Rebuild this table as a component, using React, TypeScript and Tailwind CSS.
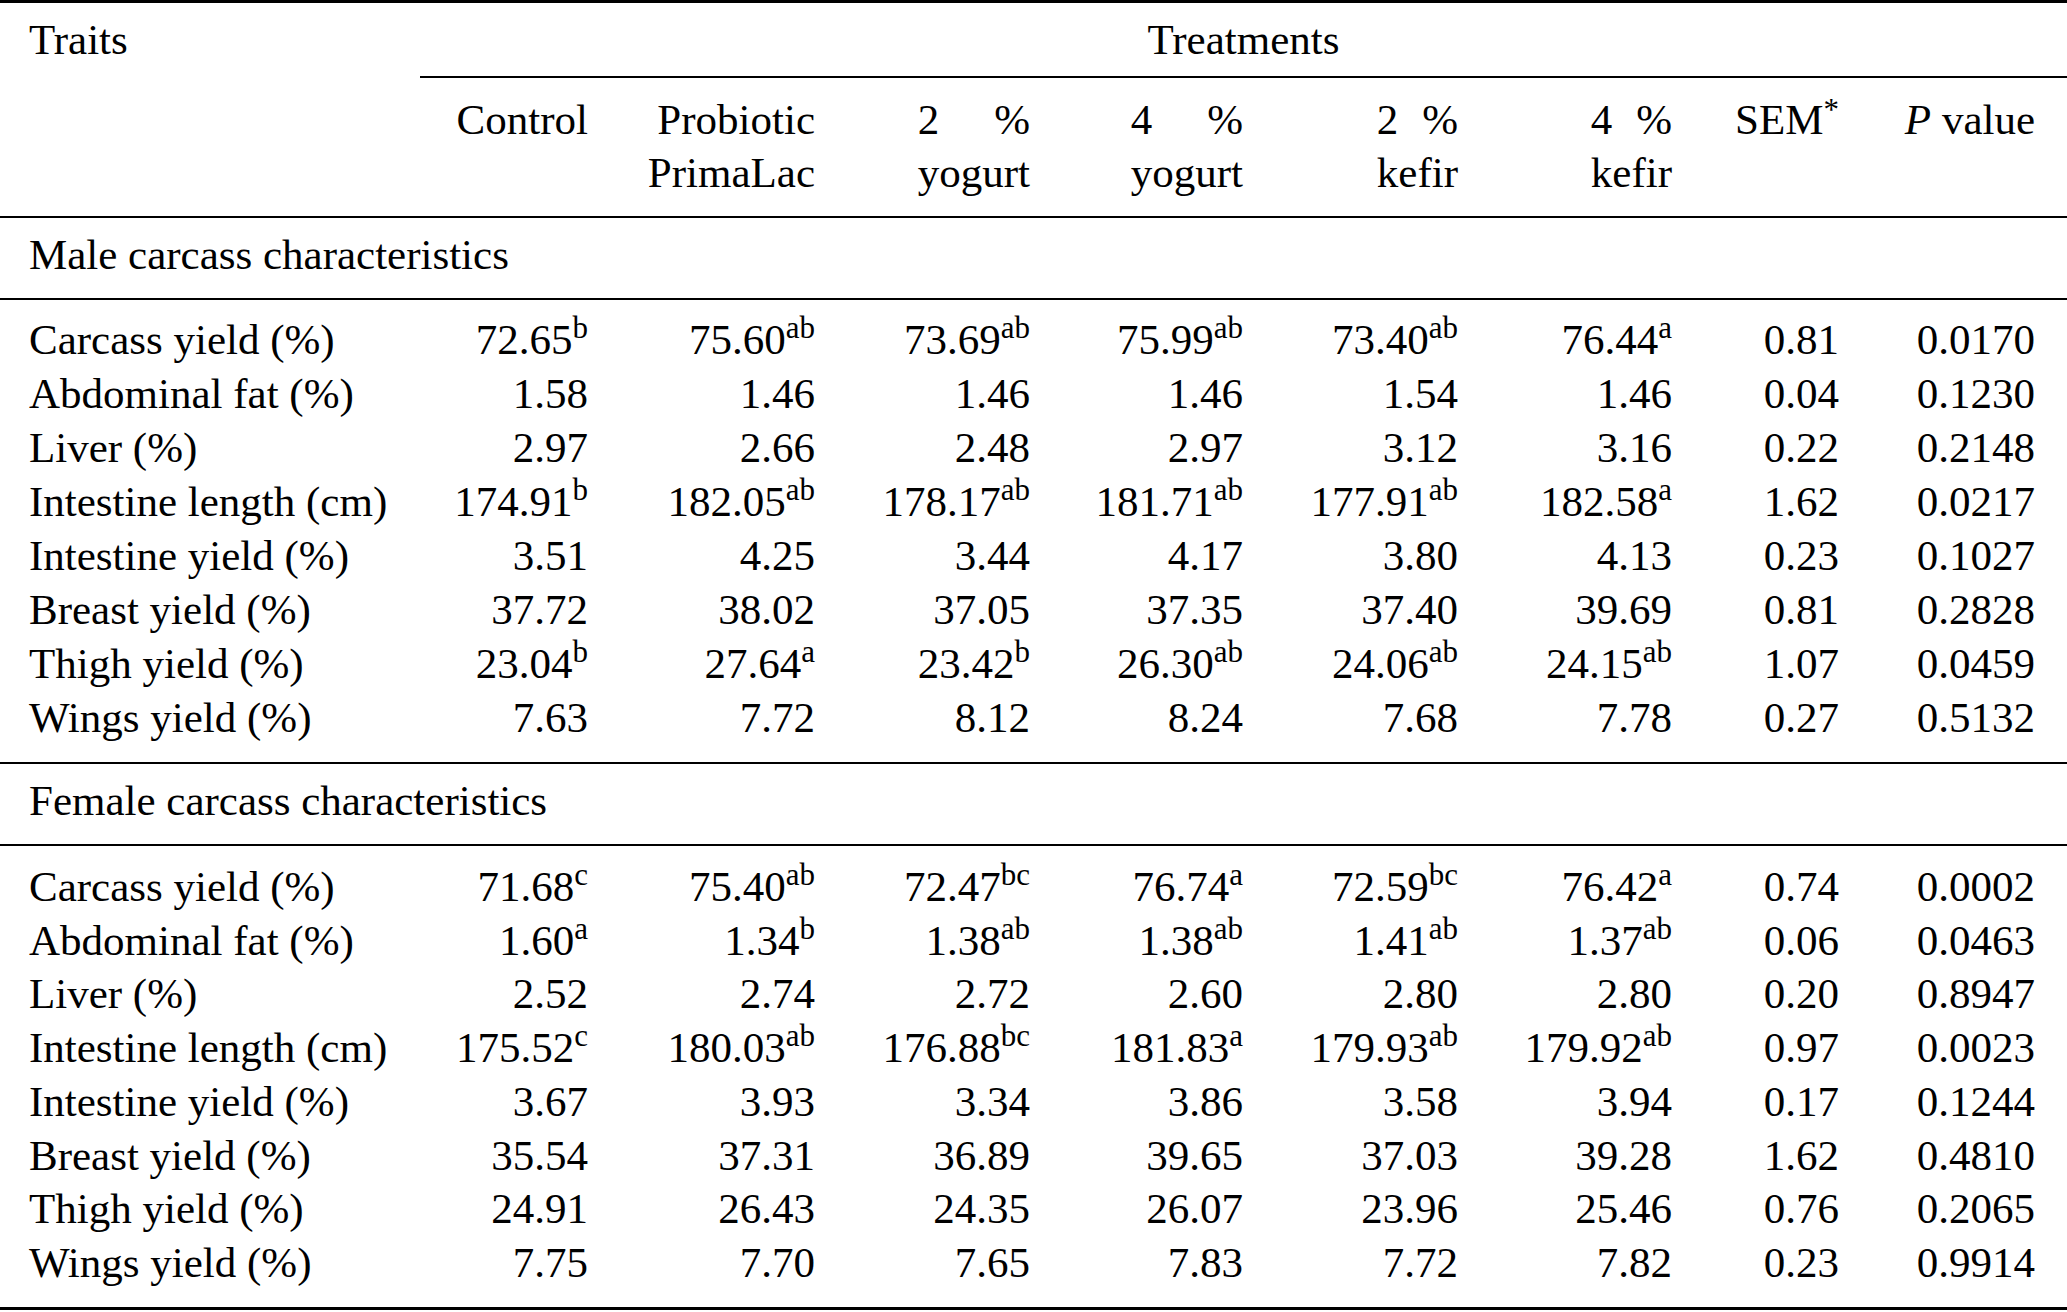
import React from 'react';

type Row = string[];

const male: Row[] = [
  ['Carcass yield (%)', '72.65^b', '75.60^ab', '73.69^ab', '75.99^ab', '73.40^ab', '76.44^a', '0.81', '0.0170'],
  ['Abdominal fat (%)', '1.58', '1.46', '1.46', '1.46', '1.54', '1.46', '0.04', '0.1230'],
  ['Liver (%)', '2.97', '2.66', '2.48', '2.97', '3.12', '3.16', '0.22', '0.2148'],
  ['Intestine length (cm)', '174.91^b', '182.05^ab', '178.17^ab', '181.71^ab', '177.91^ab', '182.58^a', '1.62', '0.0217'],
  ['Intestine yield (%)', '3.51', '4.25', '3.44', '4.17', '3.80', '4.13', '0.23', '0.1027'],
  ['Breast yield (%)', '37.72', '38.02', '37.05', '37.35', '37.40', '39.69', '0.81', '0.2828'],
  ['Thigh yield (%)', '23.04^b', '27.64^a', '23.42^b', '26.30^ab', '24.06^ab', '24.15^ab', '1.07', '0.0459'],
  ['Wings yield (%)', '7.63', '7.72', '8.12', '8.24', '7.68', '7.78', '0.27', '0.5132'],
];

const female: Row[] = [
  ['Carcass yield (%)', '71.68^c', '75.40^ab', '72.47^bc', '76.74^a', '72.59^bc', '76.42^a', '0.74', '0.0002'],
  ['Abdominal fat (%)', '1.60^a', '1.34^b', '1.38^ab', '1.38^ab', '1.41^ab', '1.37^ab', '0.06', '0.0463'],
  ['Liver (%)', '2.52', '2.74', '2.72', '2.60', '2.80', '2.80', '0.20', '0.8947'],
  ['Intestine length (cm)', '175.52^c', '180.03^ab', '176.88^bc', '181.83^a', '179.93^ab', '179.92^ab', '0.97', '0.0023'],
  ['Intestine yield (%)', '3.67', '3.93', '3.34', '3.86', '3.58', '3.94', '0.17', '0.1244'],
  ['Breast yield (%)', '35.54', '37.31', '36.89', '39.65', '37.03', '39.28', '1.62', '0.4810'],
  ['Thigh yield (%)', '24.91', '26.43', '24.35', '26.07', '23.96', '25.46', '0.76', '0.2065'],
  ['Wings yield (%)', '7.75', '7.70', '7.65', '7.83', '7.72', '7.82', '0.23', '0.9914'],
];

// column grid shared by header and body rows
const cols = 'grid grid-cols-[422px_166px_227px_215px_213px_215px_214px_167px_196px]';

const Sup = ({ children }: { children: React.ReactNode }) => (
  <span className="relative top-[-16px] text-[31px] leading-none align-baseline">{children}</span>
);

const Cell = ({ value }: { value: string }) => {
  const [num, sup] = value.split('^');
  return (
    <div className="text-right whitespace-nowrap">
      {num}
      {sup && <Sup>{sup}</Sup>}
    </div>
  );
};

// "2 %" spread over the width of the word below it
const Pct = ({ n, word }: { n: string; word: string }) => (
  <div className="text-right">
    <div className="inline-grid text-left">
      <div className="flex justify-between">
        <span>{n}</span>
        <span>%</span>
      </div>
      <div>{word}</div>
    </div>
  </div>
);

const Rule = ({ thick }: { thick?: boolean }) => (
  <div className={thick ? 'h-[3px] bg-black' : 'h-[2px] bg-black'} />
);

const Section = ({ title, rows, rowClass, bodyClass }: { title: string; rows: Row[]; rowClass: string; bodyClass: string }) => (
  <>
    <div className="pl-[29px] pt-[10px] pb-[17px] leading-[53px]">{title}</div>
    <Rule />
    <div className={bodyClass}>
      {rows.map((r) => (
        <div key={r[0]} className={`${cols} ${rowClass}`}>
          <div className="pl-[29px] whitespace-nowrap">{r[0]}</div>
          {r.slice(1).map((v, i) => (
            <Cell key={i} value={v} />
          ))}
        </div>
      ))}
    </div>
  </>
);

export default function App() {
  return (
    <div className="w-[2067px] h-[1312px] bg-white text-black font-[family-name:'Liberation_Serif','Times_New_Roman',serif] text-[43px] leading-[53px]">
      <Rule thick />

      <div className="flex pt-[10px] pb-[10px]">
        <div className="w-[422px] pl-[29px]">Traits</div>
        <div className="flex-1 text-center pr-[2px]">Treatments</div>
      </div>
      <div className="ml-[420px] h-[2px] bg-black" />

      <div className={`${cols} pt-[15px] pb-[17px]`}>
        <div />
        <div className="text-right">Control</div>
        <div className="text-right">
          Probiotic
          <br />
          PrimaLac
        </div>
        <Pct n="2" word="yogurt" />
        <Pct n="4" word="yogurt" />
        <Pct n="2" word="kefir" />
        <Pct n="4" word="kefir" />
        <div className="text-right">
          SEM<span className="relative top-[-14px] text-[31px] leading-none">*</span>
        </div>
        <div className="text-right">
          <i>P</i> value
        </div>
      </div>
      <Rule />

      <Section title="Male carcass characteristics" rows={male} rowClass="leading-[54px]" bodyClass="pt-[13px] pb-[17px]" />
      <Rule />
      <Section title="Female carcass characteristics" rows={female} rowClass="leading-[53.7px]" bodyClass="pt-[14px] pb-[17px]" />
      <Rule thick />
    </div>
  );
}
